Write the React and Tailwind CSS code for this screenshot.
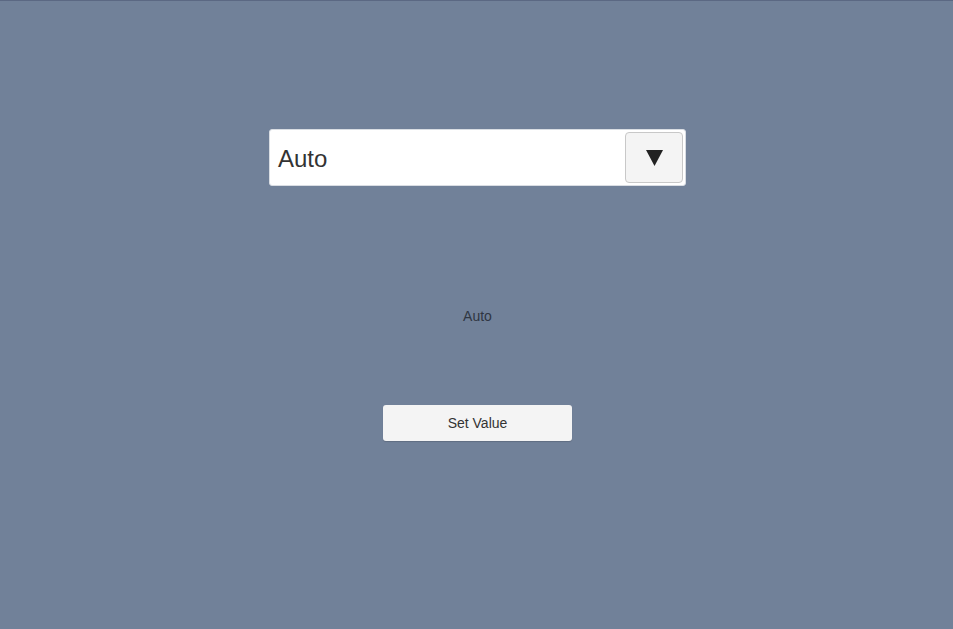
import { useState } from 'react';

export default function App() {
  const [value] = useState('Auto');

  return (
    <div className="h-[629px] w-full bg-[#718199] border-t border-[#5b6883] flex flex-col items-center pl-[2px] font-['Liberation_Sans',Arial,sans-serif]">
      <div className="mt-[128px] w-[417px] h-[57px] bg-white rounded-[3px] border border-[#d9dde3] flex items-center justify-between pl-[8px] pr-[2px]">
        <span className="text-[24px] text-[#333] pt-[2px]">{value}</span>
        <button className="w-[58px] h-[51px] bg-[#f4f4f4] border border-[#c8c8c8] rounded-[4px] flex items-center justify-center">
          <svg width="17" height="16" viewBox="0 0 17 16">
            <path d="M0 0 H17 L8.5 16 Z" fill="#222" />
          </svg>
        </button>
      </div>

      <div className="mt-[122px] text-[14px] text-[#2f3642] leading-[16px]">{value}</div>

      <button className="mt-[81px] w-[189px] h-[36px] bg-[#f4f4f4] rounded-[3px] text-[14px] text-[#333] shadow-[0_1px_1px_rgba(0,0,0,0.15)]">
        Set Value
      </button>
    </div>
  );
}
